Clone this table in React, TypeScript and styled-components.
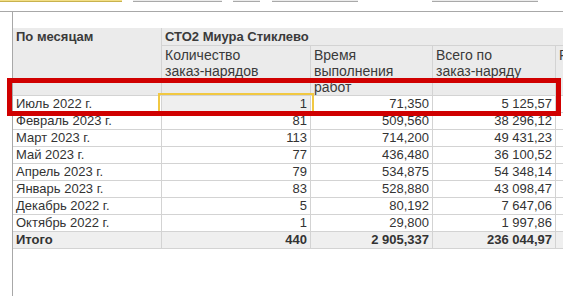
import React from "react";
import styled, { createGlobalStyle, css } from "styled-components";

const GlobalStyle = createGlobalStyle`
  html, body { margin: 0; padding: 0; background: #ffffff; }
  body { font-family: "Liberation Sans", Arial, sans-serif; }
  * { box-sizing: border-box; }
`;

const Page = styled.div`
  position: relative;
  width: 563px;
  height: 296px;
  overflow: hidden;
  background: #ffffff;
  display: flex;
  flex-direction: column;
`;

const Toolbar = styled.div`
  height: 12px;
  flex: none;
  display: flex;
  align-items: flex-start;
  border-bottom: 1px solid #a8a8a8;
`;

const ToolButton = styled.div<{ $w: number; $ml: number; $accent?: boolean }>`
  width: ${(p) => p.$w}px;
  margin-left: ${(p) => p.$ml}px;
  height: 2px;
  background: ${(p) => (p.$accent ? "#f3df86" : "#ececec")};
  border-bottom: 1px solid ${(p) => (p.$accent ? "#c8b24e" : "#a9a9a9")};
`;

const Main = styled.div`
  flex: 1;
  display: flex;
`;

const Gutter = styled.div`
  width: 12px;
  flex: none;
`;

const Panel = styled.div`
  flex: 1;
  border-left: 1px solid #a8a8a8;
  padding-top: 16px;
  overflow: hidden;
`;

const Grid = styled.div`
  display: grid;
  grid-template-columns: 149px 149px 122px 123px 100px;
  grid-template-rows: 18px 50px repeat(9, 17px);
  color: #333333;
  font-size: 13px;
  line-height: 16px;
`;

const cellBase = css`
  border-right: 1px solid #d3d3d3;
  border-bottom: 1px solid #d3d3d3;
  padding: 0 3px;
  white-space: nowrap;
  overflow: hidden;
`;

const HeadCell = styled.div<{ $col?: string; $row?: string; $group?: boolean }>`
  ${cellBase};
  background: #ebebeb;
  padding-top: 1px;
  font-size: ${(p) => (p.$group ? "13px" : "14px")};
  font-weight: ${(p) => (p.$group ? 700 : 400)};
  color: #3a3a3a;
  grid-column: ${(p) => p.$col ?? "auto"};
  grid-row: ${(p) => p.$row ?? "auto"};
`;

const HeadLine = styled.span`
  display: block;
`;

const Cell = styled.div<{ $num?: boolean; $total?: boolean; $selected?: boolean }>`
  ${cellBase};
  text-align: ${(p) => (p.$num ? "right" : "left")};
  font-weight: ${(p) => (p.$total ? 700 : 400)};
  background: ${(p) => (p.$total || p.$selected ? "#efefef" : "#ffffff")};
`;

const FocusFrame = styled.div`
  position: absolute;
  left: 158px;
  top: 93px;
  width: 156px;
  height: 21px;
  border: 2px solid #f1c842;
  pointer-events: none;
`;

const Highlight = styled.div`
  position: absolute;
  left: 7px;
  top: 78px;
  width: 554px;
  height: 38px;
  border: 5px solid #d00000;
  pointer-events: none;
`;

type Row = { month: string; count: string; time: string; total: string };

const rows: Row[] = [
  { month: "Июль 2022 г.", count: "1", time: "71,350", total: "5 125,57" },
  { month: "Февраль 2023 г.", count: "81", time: "509,560", total: "38 296,12" },
  { month: "Март 2023 г.", count: "113", time: "714,200", total: "49 431,23" },
  { month: "Май 2023 г.", count: "77", time: "436,480", total: "36 100,52" },
  { month: "Апрель 2023 г.", count: "79", time: "534,875", total: "54 348,14" },
  { month: "Январь 2023 г.", count: "83", time: "528,880", total: "43 098,47" },
  { month: "Декабрь 2022 г.", count: "5", time: "80,192", total: "7 647,06" },
  { month: "Октябрь 2022 г.", count: "1", time: "29,800", total: "1 997,86" },
];

const subHeaders: string[][] = [
  ["Количество", "заказ-нарядов"],
  ["Время", "выполнения", "работ"],
  ["Всего по", "заказ-наряду"],
  ["Р"],
];

const buttons = [
  { w: 122, ml: 0, accent: true },
  { w: 89, ml: 11 },
  { w: 27, ml: 11 },
  { w: 86, ml: 12 },
  { w: 106, ml: 74 },
];

export default function App() {
  return (
    <>
      <GlobalStyle />
      <Page>
        <Toolbar>
          {buttons.map((b, i) => (
            <ToolButton key={i} $w={b.w} $ml={b.ml} $accent={b.accent} />
          ))}
        </Toolbar>
        <Main>
          <Gutter />
          <Panel>
            <Grid>
              <HeadCell $row="1 / 3" $group>По месяцам</HeadCell>
              <HeadCell $col="2 / 6" $group>СТО2 Миура Стиклево</HeadCell>
              {subHeaders.map((lines, i) => (
                <HeadCell key={i}>
                  {lines.map((l) => (
                    <HeadLine key={l}>{l}</HeadLine>
                  ))}
                </HeadCell>
              ))}
              {rows.map((r, i) => (
                <React.Fragment key={r.month}>
                  <Cell>{r.month}</Cell>
                  <Cell $num $selected={i === 0}>{r.count}</Cell>
                  <Cell $num>{r.time}</Cell>
                  <Cell $num>{r.total}</Cell>
                  <Cell />
                </React.Fragment>
              ))}
              <Cell $total>Итого</Cell>
              <Cell $total $num>440</Cell>
              <Cell $total $num>2 905,337</Cell>
              <Cell $total $num>236 044,97</Cell>
              <Cell $total />
            </Grid>
          </Panel>
        </Main>
        <FocusFrame />
        <Highlight />
      </Page>
    </>
  );
}
